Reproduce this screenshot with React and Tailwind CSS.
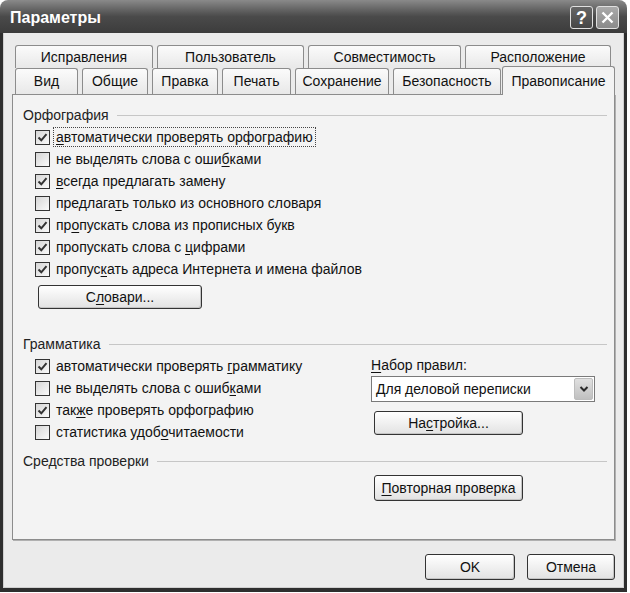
import React from 'react'

const Acc = ({ text, u }) => {
  if (u === undefined || u < 0) return <>{text}</>
  return (
    <>
      {text.slice(0, u)}
      <span className="underline underline-offset-2">{text[u]}</span>
      {text.slice(u + 1)}
    </>
  )
}

const CheckMark = () => (
  <svg width="11" height="11" viewBox="0 0 11 11" className="block">
    <path d="M1.5 5.5 L4.3 8.3 L9.5 2.2" fill="none" stroke="#333" strokeWidth="2" />
  </svg>
)

const CheckRow = ({ checked, text, u, focus }) => (
  <div className="h-[22px] flex items-center">
    <div className="w-[15px] h-[15px] shrink-0 border border-[#333] bg-gradient-to-br from-[#d6d6d6] to-[#fafafa] flex items-center justify-center">
      {checked && <CheckMark />}
    </div>
    <span
      className={
        'ml-[3px] px-[2px] leading-[18px] text-[#111] ' +
        (focus ? 'border border-dotted border-[#444]' : 'border border-transparent')
      }
    >
      <Acc text={text} u={u} />
    </span>
  </div>
)

const Heading = ({ text }) => (
  <div className="h-[22px] flex items-center pl-[10px] pr-[7px]">
    <span className="text-[#222]">{text}</span>
    <div className="flex-1 ml-[8px] h-px bg-[#c6c6c6]" />
  </div>
)

const Button = ({ children, className = '' }) => (
  <div
    className={
      'flex items-center justify-center rounded-[3px] border border-[#333] bg-gradient-to-b from-[#ffffff] to-[#e2e2e2] shadow-[inset_-1px_-1px_0_#c4c4c4] text-[#111] ' +
      className
    }
  >
    {children}
  </div>
)

const Tab = ({ label, w }) => (
  <div
    className={`${w} h-full flex items-center justify-center rounded-t-[3px] border border-b-0 border-[#8c8c8c] bg-gradient-to-b from-[#fbfbfb] to-[#e8e8e8] text-[#111]`}
  >
    {label}
  </div>
)

export default function App() {
  return (
    <div className="w-[630px] h-[593px] bg-white font-['Liberation_Sans',Arial,sans-serif] text-[14px]">
      <div className="w-[627px] h-[592px] flex flex-col rounded-t-[8px] overflow-hidden">
        {/* title bar */}
        <div className="h-[33px] shrink-0 flex items-center bg-gradient-to-b from-[#8a8a8a] via-[#4a4a4a] to-[#3c3c3c] pl-[10px] pr-[8px]">
          <span className="text-white font-bold text-[16px] pt-[3px]">Параметры</span>
          <div className="ml-auto flex gap-[3px] pt-[2px]">
            <div className="w-[23px] h-[23px] rounded-[3px] border border-[#e0e0e0] bg-gradient-to-b from-[#666] to-[#464646] flex items-center justify-center text-white font-bold text-[18px] leading-none">
              ?
            </div>
            <div className="w-[23px] h-[23px] rounded-[3px] border border-[#e0e0e0] bg-gradient-to-b from-[#aaa] to-[#8a8a8a] flex items-center justify-center">
              <svg width="15" height="15" viewBox="0 0 15 15">
                <path d="M2.5 2.5 L12.5 12.5 M12.5 2.5 L2.5 12.5" stroke="#fff" strokeWidth="2.4" />
              </svg>
            </div>
          </div>
        </div>

        {/* body */}
        <div className="flex-1 border-x-[3px] border-b-[4px] border-[#2e2e2e] bg-[#ebebeb] shadow-[inset_1px_0_#cfcfcf,inset_-1px_-1px_#cfcfcf] pl-[9px] pt-[12px]">
          {/* tabs */}
          <div className="pl-[3px] flex flex-col">
            <div className="h-[23px] flex gap-[4px]">
              <Tab label="Исправления" w="w-[138px]" />
              <Tab label="Пользователь" w="w-[147px]" />
              <Tab label="Совместимость" w="w-[153px]" />
              <Tab label="Расположение" w="w-[146px]" />
            </div>
            <div className="h-[26px] flex items-end gap-[4px]">
              <Tab label="Вид" w="w-[63px]" />
              <Tab label="Общие" w="w-[66px]" />
              <Tab label="Правка" w="w-[66px]" />
              <Tab label="Печать" w="w-[69px]" />
              <Tab label="Сохранение" w="w-[94px]" />
              <Tab label="Безопасность" w="w-[108px]" />
              <div className="relative z-10 -ml-[3px] -mb-px w-[113px] h-[29px] shrink-0 flex items-center justify-center rounded-t-[3px] border border-b-0 border-[#8c8c8c] bg-[#f3f3f3] text-[#111] pt-[1px]">
                Правописание
              </div>
            </div>
          </div>

          {/* panel */}
          <div className="w-[603px] h-[446px] border border-[#8c8c8c] shadow-[1px_1px_0_#b0b0b0] bg-[#f3f3f3] pt-[9px]">
            <Heading text="Орфография" />
            <div className="pl-[22px]">
              <CheckRow checked text="автоматически проверять орфографию" u={0} focus />
              <CheckRow text="не выделять слова с ошибками" u={23} />
              <CheckRow checked text="всегда предлагать замену" u={0} />
              <CheckRow text="предлагать только из основного словаря" u={8} />
              <CheckRow checked text="пропускать слова из прописных букв" u={2} />
              <CheckRow checked text="пропускать слова с цифрами" u={19} />
              <CheckRow checked text="пропускать адреса Интернета и имена файлов" u={6} />
              <Button className="mt-[5px] ml-[3px] w-[164px] h-[24px]">
                <Acc text="Словари..." u={1} />
              </Button>
            </div>

            <div className="mt-[24px]">
              <Heading text="Грамматика" />
            </div>
            <div className="flex">
              <div className="w-[358px] pl-[22px]">
                <CheckRow checked text="автоматически проверять грамматику" u={24} />
                <CheckRow text="не выделять слова с ошибками" u={24} />
                <CheckRow checked text="также проверять орфографию" u={3} />
                <CheckRow text="статистика удобочитаемости" u={15} />
              </div>
              <div className="flex flex-col">
                <div className="h-[21px] flex items-center text-[#111]">
                  <Acc text="Набор правил:" u={0} />
                </div>
                <div className="w-[224px] h-[26px] border border-[#7a7a7a] bg-white flex items-center pl-[4px] pr-[1px] text-[#111]">
                  <span className="flex-1">Для деловой переписки</span>
                  <div className="w-[19px] h-[22px] rounded-[2px] bg-gradient-to-b from-[#e0e0e0] to-[#c0c0c0] border border-[#bdbdbd] flex items-center justify-center">
                    <svg width="10" height="8" viewBox="0 0 10 8">
                      <path d="M1.5 2 L5 5.5 L8.5 2" fill="none" stroke="#2a2a2a" strokeWidth="2" />
                    </svg>
                  </div>
                </div>
                <Button className="mt-[9px] ml-[3px] w-[149px] h-[24px]">
                  <Acc text="Настройка..." u={2} />
                </Button>
              </div>
            </div>

            <div className="mt-[7px]">
              <Heading text="Средства проверки" />
            </div>
            <Button className="mt-[3px] ml-[361px] w-[149px] h-[26px]">
              <Acc text="Повторная проверка" u={0} />
            </Button>
          </div>

          {/* dialog buttons */}
          <div className="w-[603px] mt-[14px] flex justify-end gap-[12px]">
            <Button className="w-[90px] h-[26px]">OK</Button>
            <Button className="w-[88px] h-[26px]">Отмена</Button>
          </div>
        </div>
      </div>
    </div>
  )
}
